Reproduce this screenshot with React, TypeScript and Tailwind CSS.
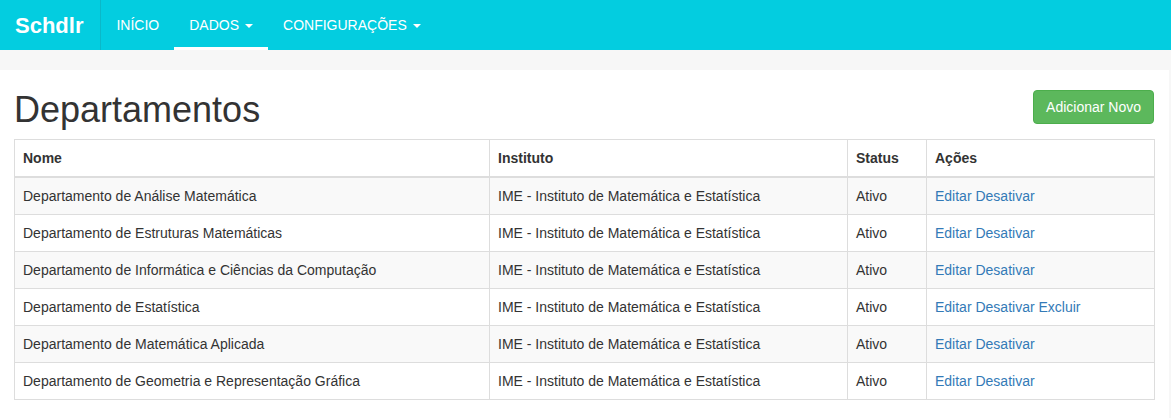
import React from 'react';

const rows = [
  { nome: 'Departamento de Análise Matemática', excluir: false },
  { nome: 'Departamento de Estruturas Matemáticas', excluir: false },
  { nome: 'Departamento de Informática e Ciências da Computação', excluir: false },
  { nome: 'Departamento de Estatística', excluir: true },
  { nome: 'Departamento de Matemática Aplicada', excluir: false },
  { nome: 'Departamento de Geometria e Representação Gráfica', excluir: false },
];

const Caret = () => (
  <span className="ml-[6px] inline-block h-0 w-0 border-x-[4px] border-t-[4px] border-x-transparent border-t-white align-middle" />
);

export default function App() {
  return (
    <div className="min-h-[418px] bg-[#f7f7f7] font-['Liberation_Sans',Arial,sans-serif] text-[14px] text-[#333]">
      {/* Navbar */}
      <nav className="flex h-[50px] items-stretch bg-[#03cde0] text-white">
        <div className="flex items-center border-r border-[#0bb8c8] pl-[15px] pr-[17px] text-[22px] font-bold">Schdlr</div>
        <a className="flex items-center px-[15px] pt-[1px]">INÍCIO</a>
        <a className="flex items-center border-b-[3px] border-white px-[15px] pt-[4px]">
          DADOS
          <Caret />
        </a>
        <a className="flex items-center px-[15px] pt-[1px]">
          CONFIGURAÇÕES
          <Caret />
        </a>
      </nav>

      {/* Content panel */}
      <div className="mt-5 mr-[2px] bg-white px-[14px] pb-[19px]">
        <div className="flex items-start justify-between pt-5">
          <h1 className="h-[40px] text-[36px] leading-[40px] text-[#333]">Departamentos</h1>
          <button className="mr-[1px] h-[34px] rounded-[4px] border border-[#4cae4c] bg-[#5cb85c] px-3 leading-[20px] text-white">
            Adicionar Novo
          </button>
        </div>

        <table className="mt-[9px] w-full table-fixed border-collapse border border-[#ddd]">
          <colgroup>
            <col className="w-[475px]" />
            <col className="w-[358px]" />
            <col className="w-[79px]" />
            <col />
          </colgroup>
          <thead>
            <tr>
              <th className="border border-b-2 border-[#ddd] p-2 text-left leading-[20px] font-bold">Nome</th>
              <th className="border border-b-2 border-[#ddd] p-2 text-left leading-[20px] font-bold">Instituto</th>
              <th className="border border-b-2 border-[#ddd] p-2 text-left leading-[20px] font-bold">Status</th>
              <th className="border border-b-2 border-[#ddd] p-2 text-left leading-[20px] font-bold">Ações</th>
            </tr>
          </thead>
          <tbody>
            {rows.map((r, i) => (
              <tr key={r.nome} className={i % 2 === 0 ? 'bg-[#f9f9f9]' : 'bg-white'}>
                <td className="border border-[#ddd] p-2 leading-[20px]">{r.nome}</td>
                <td className="border border-[#ddd] p-2 leading-[20px]">IME - Instituto de Matemática e Estatística</td>
                <td className="border border-[#ddd] p-2 leading-[20px]">Ativo</td>
                <td className="border border-[#ddd] p-2 leading-[20px] text-[#337ab7]">
                  <a>Editar</a> <a>Desativar</a>
                  {r.excluir && (
                    <>
                      {' '}
                      <a>Excluir</a>
                    </>
                  )}
                </td>
              </tr>
            ))}
          </tbody>
        </table>
      </div>
    </div>
  );
}
